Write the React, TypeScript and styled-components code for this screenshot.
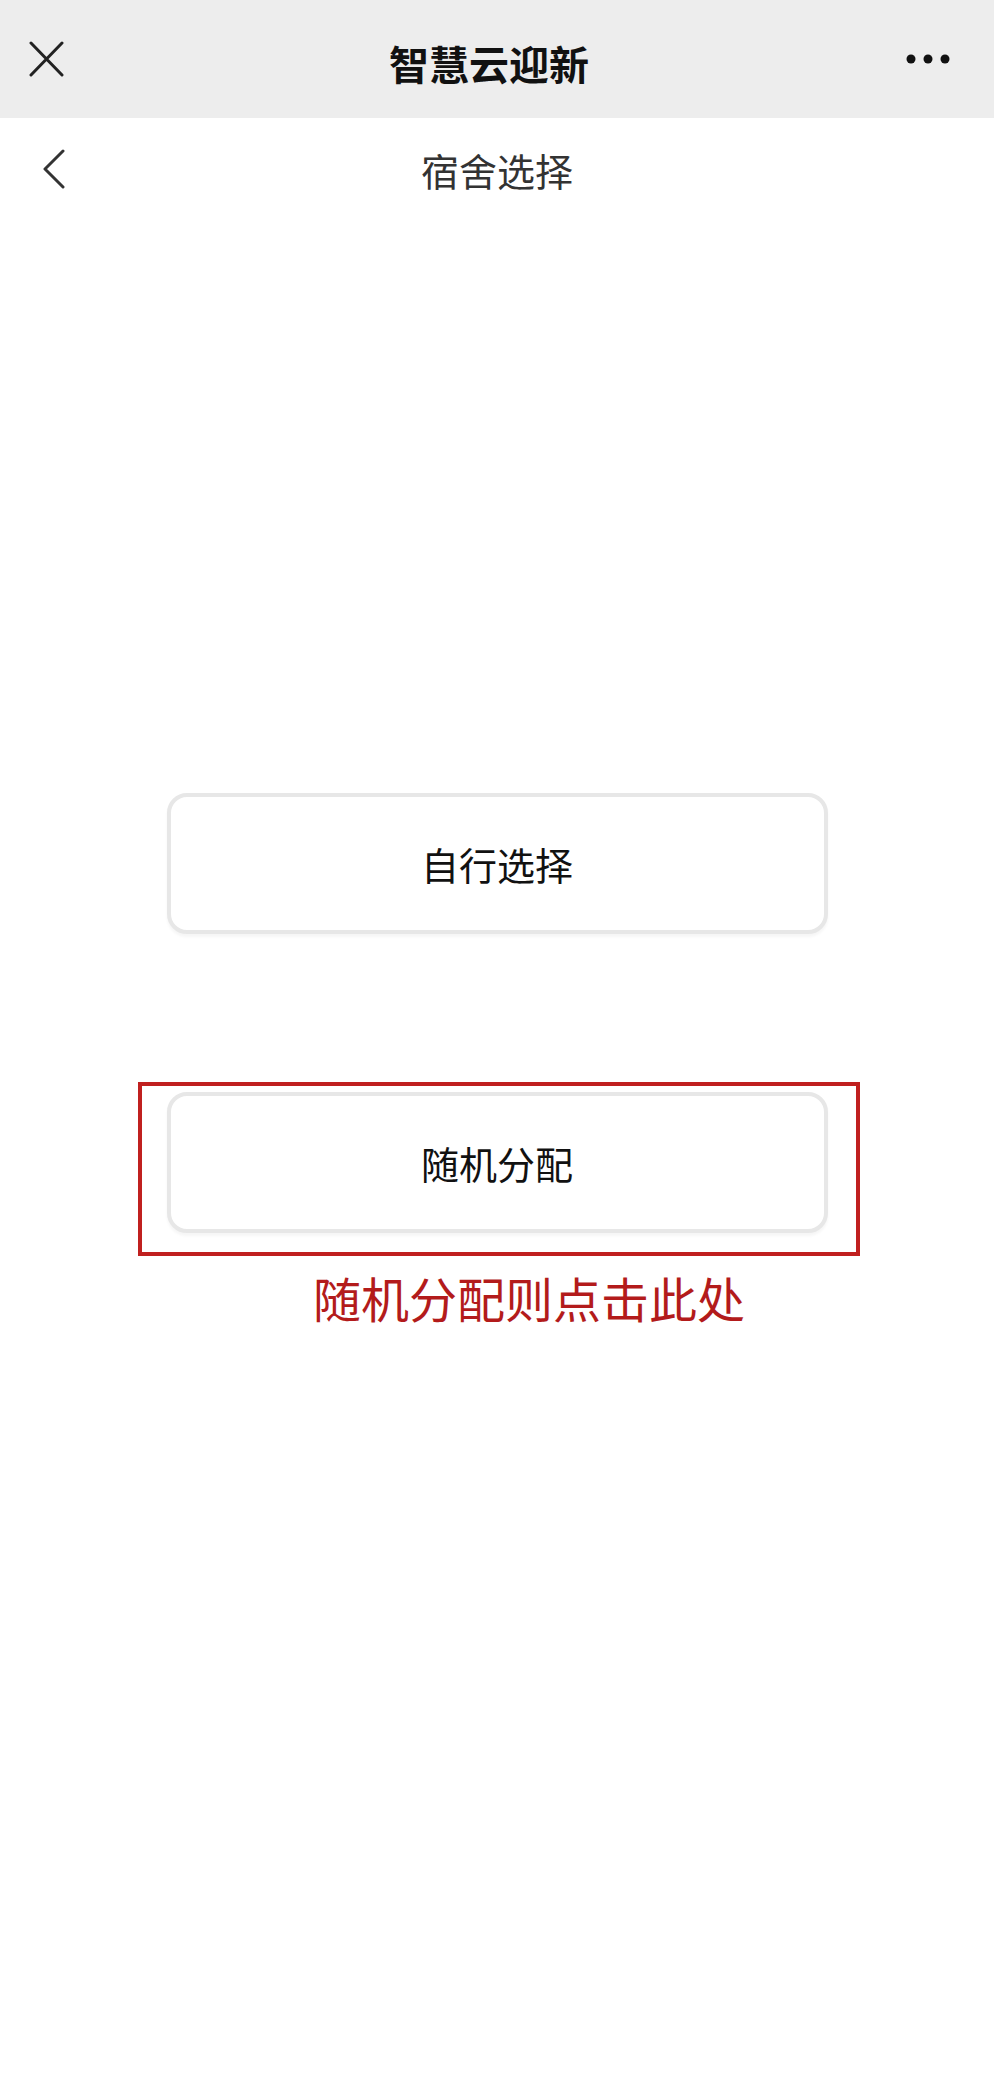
import React from 'react'
import styled, { createGlobalStyle } from 'styled-components'

const GlobalStyle = createGlobalStyle`
  html, body {
    margin: 0;
    padding: 0;
    background: #ffffff;
  }
  body {
    font-family: "Noto Sans CJK SC", "Noto Sans", sans-serif;
  }
`

const Page = styled.div`
  width: 994px;
  min-height: 2089px;
  background: #ffffff;
  display: flex;
  flex-direction: column;
`

const TopBar = styled.div`
  height: 118px;
  background: #ededed;
  display: grid;
  grid-template-columns: 1fr auto 1fr;
  align-items: center;
  padding: 0 44px 0 28px;
  box-sizing: border-box;
`

const TopTitle = styled.div`
  font-size: 40px;
  font-weight: 700;
  color: #111111;
  line-height: 1;
  padding-top: 8px;
`

const IconSlot = styled.div<{ align?: 'start' | 'end' }>`
  display: flex;
  justify-content: ${({ align }) => (align === 'end' ? 'flex-end' : 'flex-start')};
  align-items: center;
`

const SubHeader = styled.div`
  height: 102px;
  display: grid;
  grid-template-columns: 1fr auto 1fr;
  align-items: center;
  padding: 0 40px;
  box-sizing: border-box;
`

const SubTitle = styled.div`
  font-size: 38px;
  color: #333333;
  line-height: 1;
  padding-top: 2px;
`

const Main = styled.div`
  display: flex;
  flex-direction: column;
  align-items: center;
  padding-top: 573px;
`

const ChoiceButton = styled.div`
  width: 661px;
  height: 141px;
  box-sizing: border-box;
  border: 4px solid #e7e7e7;
  border-radius: 20px;
  box-shadow: 0 3px 3px rgba(0, 0, 0, 0.04);
  background: #ffffff;
  display: flex;
  align-items: center;
  justify-content: center;
  font-size: 38px;
  color: #111111;
`

const Highlight = styled.div`
  width: 722px;
  box-sizing: border-box;
  margin-top: 148px;
  border: 4px solid #c0201f;
  padding: 6px 28px 19px 25px;
  margin-left: 3px;
`

const Hint = styled.div`
  align-self: flex-start;
  margin-left: 313px;
  margin-top: 13px;
  font-size: 48px;
  line-height: 1.2;
  color: #b31b1b;
`

const CloseIcon = () => (
  <svg width="36" height="36" viewBox="0 0 36 36">
    <path d="M3 2 L34 34 M34 2 L3 34" stroke="#222" strokeWidth="3" strokeLinecap="round" fill="none" />
  </svg>
)

const MoreIcon = () => (
  <svg width="44" height="12" viewBox="0 0 44 12">
    <circle cx="5" cy="6" r="4.5" fill="#111" />
    <circle cx="22" cy="6" r="4.5" fill="#111" />
    <circle cx="39" cy="6" r="4.5" fill="#111" />
  </svg>
)

const BackIcon = () => (
  <svg width="26" height="40" viewBox="0 0 26 40">
    <polyline points="23,2 5,20 23,38" stroke="#333" strokeWidth="3" fill="none" strokeLinecap="round" strokeLinejoin="round" />
  </svg>
)

const App: React.FC = () => {
  return (
    <>
      <GlobalStyle />
      <Page>
        <TopBar>
          <IconSlot>
            <CloseIcon />
          </IconSlot>
          <TopTitle>智慧云迎新</TopTitle>
          <IconSlot align="end">
            <MoreIcon />
          </IconSlot>
        </TopBar>
        <SubHeader>
          <IconSlot>
            <BackIcon />
          </IconSlot>
          <SubTitle>宿舍选择</SubTitle>
          <IconSlot />
        </SubHeader>
        <Main>
          <ChoiceButton>自行选择</ChoiceButton>
          <Highlight>
            <ChoiceButton>随机分配</ChoiceButton>
          </Highlight>
          <Hint>随机分配则点击此处</Hint>
        </Main>
      </Page>
    </>
  )
}

export default App
